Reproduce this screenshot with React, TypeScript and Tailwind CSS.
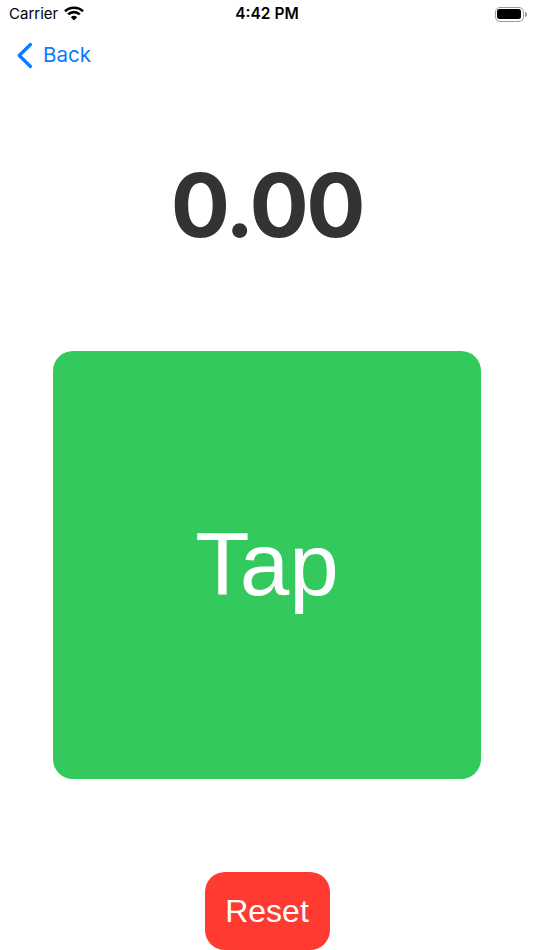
export default function App() {
  return (
    <div className="w-[534px] h-[950px] bg-white flex flex-col overflow-hidden font-['Liberation_Sans',Arial,sans-serif]">
      {/* status bar */}
      <div className="h-[28px] flex items-center justify-between pl-[9px] pr-[7px] shrink-0 font-['Inter',sans-serif] text-black">
        <div className="flex items-center gap-[6px] w-[120px]">
          <span className="text-[15px] leading-[28px]">Carrier</span>
          <svg width="20" height="15" viewBox="0 0 20 15" className="-mt-[2px]">
            <path d="M1 5.2C5.8 0.6 14.2 0.6 19 5.2" fill="none" stroke="#000" strokeWidth="2.6" />
            <path d="M4.2 8.4C7.4 5.4 12.6 5.4 15.8 8.4" fill="none" stroke="#000" strokeWidth="2.6" />
            <path d="M6.8 11.2C8.8 9.4 11.2 9.4 13.2 11.2L10 14.6Z" fill="#000" />
          </svg>
        </div>
        <span className="text-[15.5px] font-semibold leading-[28px] mr-[2px]">4:42 PM</span>
        <div className="w-[120px] flex justify-end items-center">
          <div className="w-[29px] h-[15px] rounded-[5px] border-[1.5px] border-[#9a9a9a] p-[1.5px]">
            <div className="w-full h-full bg-black rounded-[2.5px]" />
          </div>
          <div className="w-[2px] h-[5px] bg-[#9a9a9a] ml-[1px] rounded-r-sm" />
        </div>
      </div>
      {/* nav */}
      <div className="h-[54px] flex items-center pl-[16px] gap-[10px] shrink-0 text-[#0a7aff]">
        <svg width="17" height="27" viewBox="0 0 17 27">
          <path d="M14.5 2.5L3.2 13.5L14.5 24.5" fill="none" stroke="currentColor" strokeWidth="3.2" strokeLinecap="round" strokeLinejoin="round" />
        </svg>
        <span className="font-['Inter',sans-serif] text-[20.5px] leading-none">Back</span>
      </div>
      {/* timer */}
      <div className="h-[269px] shrink-0 flex items-start justify-center pt-[68px]">
        <span className="font-['Inter',sans-serif] text-[88px] font-bold leading-[110px] tracking-[-2.5px] text-[#333333]">0.00</span>
      </div>
      {/* tap area */}
      <div className="flex justify-center shrink-0">
        <button className="w-[428px] h-[428px] rounded-[20px] bg-[#34c95c] text-white text-[89px] flex items-center justify-center">
          Tap
        </button>
      </div>
      {/* reset */}
      <div className="flex justify-center pt-[93px]">
        <button className="w-[125px] h-[78px] rounded-[20px] bg-[#ff3a30] text-white text-[32px] flex items-center justify-center">
          Reset
        </button>
      </div>
    </div>
  );
}
